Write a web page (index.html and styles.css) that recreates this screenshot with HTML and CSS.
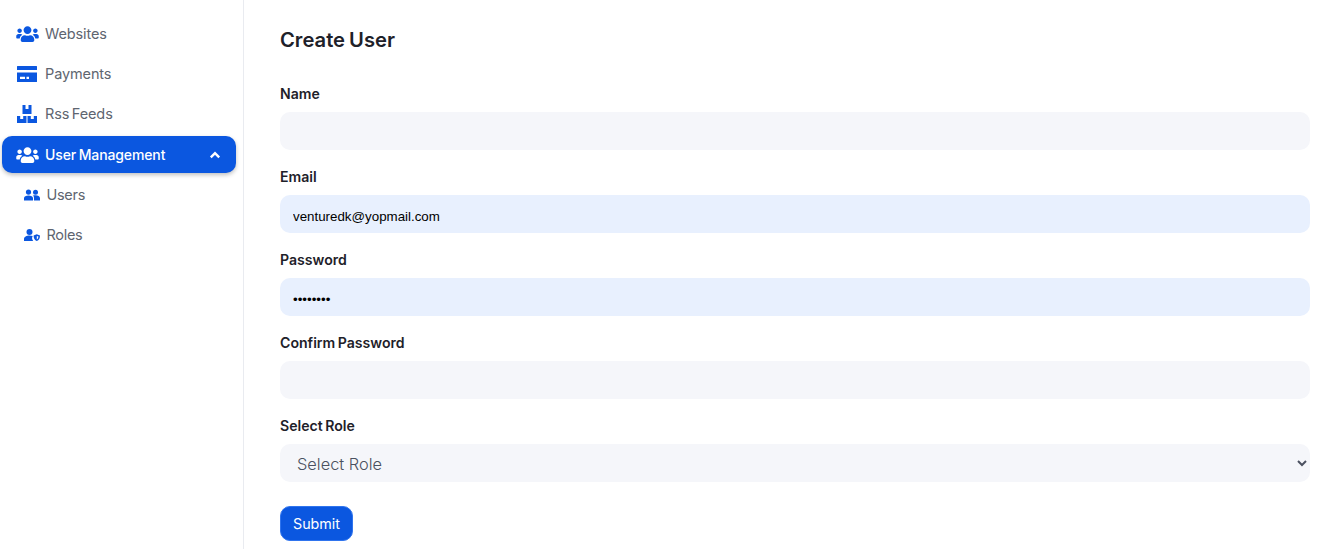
FILE: index.html
```html
<!DOCTYPE html>
<html lang="en">
<head>
<meta charset="utf-8">
<title>Create User</title>
<link rel="stylesheet" href="styles.css">
</head>
<body>
<svg class="defs" width="0" height="0" aria-hidden="true">
  <symbol id="i-users" viewBox="0 0 640 512"><path d="M96 224c35.300 0 64-28.700 64-64s-28.700-64-64-64-64 28.700-64 64 28.700 64 64 64zm448 0c35.300 0 64-28.700 64-64s-28.700-64-64-64-64 28.700-64 64 28.700 64 64 64zm32 32h-64c-17.600 0-33.500 7.100-45.100 18.600 40.300 22.100 68.900 62 75.100 109.400h66c17.700 0 32-14.300 32-32v-32c0-35.300-28.700-64-64-64zm-256 0c61.900 0 112-50.100 112-112S381.900 32 320 32 208 82.100 208 144s50.100 112 112 112zm76.800 32h-8.300c-20.800 10-43.900 16-68.500 16s-47.600-6-68.500-16h-8.300C179.600 288 128 339.600 128 403.200V432c0 26.500 21.500 48 48 48h288c26.500 0 48-21.500 48-48v-28.800c0-63.600-51.600-115.200-115.200-115.200zm-223.700-13.400C161.500 263.100 145.600 256 128 256H64c-35.300 0-64 28.700-64 64v32c0 17.700 14.300 32 32 32h65.900c6.300-47.400 34.900-87.300 75.200-109.400z"/></symbol>
</svg>
<div class="app">
  <nav class="sidebar">
    <a class="nav-item">
      <svg class="icon"><use href="#i-users"/></svg>
      <span>Websites</span>
    </a>
    <a class="nav-item">
      <svg class="icon-card" viewBox="0 0 20 16"><path d="M.5 0h19a.5.5 0 0 1 .5.5V4H0V.5A.5.5 0 0 1 .5 0zM0 6.500h20v9a.5.5 0 0 1-.5.500H.5a.5.5 0 0 1-.5-.5zM3 10.800v2.200h5v-2.200zm6.500 0v2.200h2.500v-2.200z" fill-rule="evenodd"/></svg>
      <span>Payments</span>
    </a>
    <a class="nav-item">
      <svg class="icon-box" viewBox="0 0 20 18"><path d="M5.500 0h3v4h3V0h3v9h-9zM0 11h3.200v3h3v-3h3.300v7H0zM10.500 11h3.300v3h3v-3H20v7h-9.500z"/></svg>
      <span>Rss Feeds</span>
    </a>
    <a class="nav-item active">
      <svg class="icon"><use href="#i-users"/></svg>
      <span>User Management</span>
      <svg class="chevron" viewBox="0 0 12 8"><path d="M1.800 6.300 6 2.200l4.200 4.100" fill="none" stroke="currentColor" stroke-width="2.400"/></svg>
    </a>
    <a class="nav-item sub">
      <svg class="icon-sm" viewBox="0 0 16 11"><circle cx="4.500" cy="2.600" r="2.600"/><circle cx="11.500" cy="2.800" r="2.500"/><path d="M0 11V8.800C0 7 2 6 4.500 6S9 7 9 8.800V11zM10 11V8.500c0-1-.3-1.800-1-2.400.7-.2 1.500-.3 2.500-.3 2.500 0 4.500 1 4.500 3V11z"/></svg>
      <span>Users</span>
    </a>
    <a class="nav-item sub">
      <svg class="icon-sm" viewBox="0 0 16 12"><circle cx="5.500" cy="3" r="3"/><path d="M0 12v-2c0-2 2.500-3.500 5.500-3.500 1.200 0 2.300.2 3.200.6-.5.700-.7 1.500-.6 2.400.1.900.5 1.800 1.100 2.500z"/><path d="M12.800 5.200l3.200 1.200c0 2.800-1 4.600-3.200 5.600-2.200-1-3.200-2.800-3.200-5.600zM12.800 7v3.500c.9-.5 1.500-1.500 1.600-3z" fill-rule="evenodd"/></svg>
      <span>Roles</span>
    </a>
  </nav>
  <main class="content">
    <h1 class="title">Create User</h1>
    <form class="form">
      <div class="field">
        <label class="label" for="name">Name</label>
        <input class="control" id="name" type="text">
      </div>
      <div class="field">
        <label class="label" for="email">Email</label>
        <input class="control filled" id="email" type="text" value="venturedk@yopmail.com">
      </div>
      <div class="field">
        <label class="label" for="password">Password</label>
        <input class="control filled" id="password" type="password" value="12345678">
      </div>
      <div class="field">
        <label class="label" for="confirm">Confirm Password</label>
        <input class="control" id="confirm" type="password">
      </div>
      <div class="field">
        <label class="label" for="role">Select Role</label>
        <select class="control select" id="role">
          <option>Select Role</option>
        </select>
      </div>
      <button class="submit" type="button">Submit</button>
    </form>
  </main>
</div>
</body>
</html>
```
FILE: styles.css
```css
* { box-sizing: border-box; }
html, body { margin: 0; height: 100%; background: #fff; overflow: hidden; }
body { font-family: Inter, "Noto Sans", sans-serif; color: #181c32; }
.defs { position: absolute; }
.app { display: flex; height: 549px; }

.sidebar {
  width: 244px;
  flex: none;
  border-right: 1px solid #e9ebf0;
  padding: 14px 7px 0 2px;
  display: flex;
  flex-direction: column;
}
.nav-item {
  height: 40px;
  display: flex;
  align-items: center;
  padding-left: 13px;
  font-size: 14.5px;
  letter-spacing: -0.12px;
  word-spacing: -1.4px;
  color: #5e6570;
  fill: #0b57e0;
}
.nav-item span { margin-bottom: 2px; }
.icon { width: 23px; height: 18px; flex: none; margin: 0 6.500px 0 .5px; }
.icon-card { width: 20px; height: 16px; flex: none; margin: 0 8px 0 2px; }
.icon-box { width: 20px; height: 18px; flex: none; margin: 0 8px 0 2px; }
.icon-sm { width: 16px; height: 12px; flex: none; margin: 0 6.500px 0 9px; }
.sub { letter-spacing: -0.3px; }
.nav-item.active {
  height: 37px;
  margin: 2px 0;
  background: #0b57e0;
  border-radius: 10px;
  color: #fff;
  fill: #fff;
  font-weight: 500;
  font-size: 14px;
  word-spacing: -1px;
  box-shadow: 0 2px 4px rgba(0, 0, 0, .25);
}
.nav-item.active span { margin-bottom: 0; }
.chevron { width: 12px; height: 8px; margin-left: auto; margin-right: 15px; color: #fff; }

.content { flex: 1; padding: 25px 28px 0 36px; }
.title { margin: 0 0 28px; font-size: 20.2px; line-height: 30px; font-weight: 600; word-spacing: -1px; color: #1e2129; }
.field { margin-bottom: 16px; }
.label { display: block; height: 22px; line-height: 22px; margin-bottom: 7px; font-size: 14.1px; font-weight: 600; word-spacing: -1px; color: #1e2129; }
.control {
  display: block;
  width: 100%;
  height: 38px;
  border: 0;
  border-radius: 10px;
  background-color: #f5f6fa;
  padding: 4px 13px 0;
  outline: none;
  font-family: "Liberation Sans", Arial, sans-serif;
  font-size: 13.333px;
  color: #000;
}
.filled { background-color: #e8f0fe; }
.select { padding: 2px 4px 0 13px; font-family: Inter, sans-serif; font-size: 16.4px; font-weight: 300; color: #4b5160; }
.submit {
  display: block;
  margin-top: 24px;
  width: 73px;
  height: 35px;
  background: #0b57e0;
  border: 1px solid #2f74ee;
  border-radius: 10px;
  color: #fff;
  font-family: Inter, sans-serif;
  font-size: 14.3px;
  font-weight: 400;
  padding: 0;
}
```
